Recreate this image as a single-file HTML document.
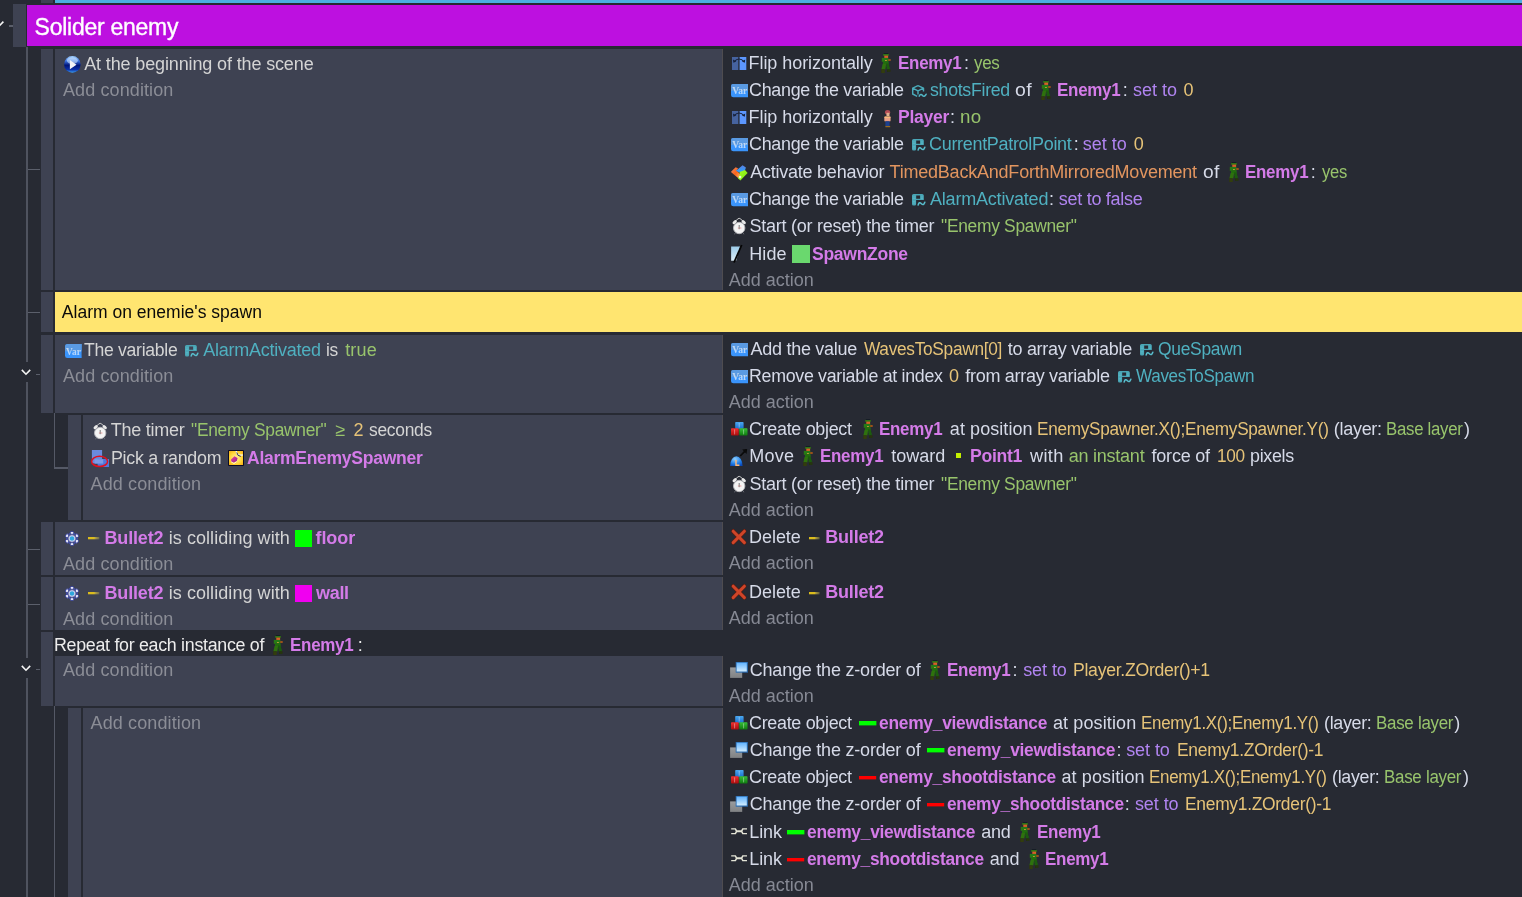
<!DOCTYPE html>
<html><head><meta charset="utf-8"><title>Events</title>
<style>
html,body{margin:0;padding:0;background:#272a33;}
body{width:1522px;height:897px;position:relative;overflow:hidden;will-change:transform;font-family:"Liberation Sans",sans-serif;font-size:18px;}
.b{position:absolute;}
.t{position:absolute;white-space:pre;line-height:20px;transform-origin:0 0;}
.i{position:absolute;display:block;overflow:visible;}
</style></head><body>
<svg width="0" height="0" style="position:absolute"><defs>
<filter id="soft2" x="-10%" y="-10%" width="120%" height="120%"><feGaussianBlur stdDeviation="0.25"/></filter>
<filter id="soft" x="-20%" y="-20%" width="140%" height="140%"><feGaussianBlur stdDeviation="0.42"/></filter>
<linearGradient id="gplay" x1="0" y1="0" x2="0" y2="1"><stop offset="0" stop-color="#9fd0ff"/><stop offset=".28" stop-color="#3f78e6"/><stop offset=".55" stop-color="#001478"/><stop offset=".8" stop-color="#0a2ea8"/><stop offset="1" stop-color="#3ea0f0"/></linearGradient>
<linearGradient id="gvar" x1="0" y1="0" x2="0" y2="1"><stop offset="0" stop-color="#5c9be0"/><stop offset="1" stop-color="#2a8cff"/></linearGradient>
<linearGradient id="gbo" x1="0" y1="0" x2="1" y2="1"><stop offset="0" stop-color="#e88a6a"/><stop offset=".5" stop-color="#f8641a"/><stop offset="1" stop-color="#ffc070"/></linearGradient>
<linearGradient id="gbb" x1="0" y1="0" x2="0" y2="1"><stop offset="0" stop-color="#5a7ee0"/><stop offset="1" stop-color="#2aa8ff"/></linearGradient>
<linearGradient id="gbg" x1="0" y1="0" x2="1" y2="1"><stop offset="0" stop-color="#a8ff20"/><stop offset=".6" stop-color="#8cf018"/><stop offset="1" stop-color="#0a8a0a"/></linearGradient>
<linearGradient id="ghide" x1="0" y1="0" x2="0" y2="1"><stop offset="0" stop-color="#9ccbe8"/><stop offset="1" stop-color="#dceef8"/></linearGradient>
<linearGradient id="gcb" x1="0" y1="0" x2="0" y2="1"><stop offset="0" stop-color="#4aa8f0"/><stop offset="1" stop-color="#1a70d0"/></linearGradient>
<linearGradient id="gcr" x1="0" y1="0" x2="0" y2="1"><stop offset="0" stop-color="#f03030"/><stop offset="1" stop-color="#a80c0c"/></linearGradient>
<linearGradient id="gcg" x1="0" y1="0" x2="0" y2="1"><stop offset="0" stop-color="#38c038"/><stop offset="1" stop-color="#0e7a0e"/></linearGradient>
<radialGradient id="gmv" cx=".4" cy=".3" r=".8"><stop offset="0" stop-color="#8fd0ff"/><stop offset=".6" stop-color="#2280e8"/><stop offset="1" stop-color="#0a48b8"/></radialGradient>
<radialGradient id="gal" cx=".5" cy=".5" r=".75"><stop offset="0" stop-color="#fff2a0"/><stop offset=".6" stop-color="#ffd232"/><stop offset="1" stop-color="#f0a010"/></radialGradient>
<linearGradient id="galm" x1="0" y1="0" x2="1" y2="1"><stop offset="0" stop-color="#f04a90"/><stop offset="1" stop-color="#8a1a9a"/></linearGradient>
<linearGradient id="gbul" x1="0" y1="0" x2="1" y2="0"><stop offset="0" stop-color="#dcbc1c"/><stop offset=".55" stop-color="#dcbc1c"/><stop offset=".6" stop-color="#d8c040" stop-opacity=".8"/><stop offset="1" stop-color="#c8b848" stop-opacity=".35"/></linearGradient>
<linearGradient id="gzg" x1="0" y1="0" x2="0" y2="1"><stop offset="0" stop-color="#9a9c9e"/><stop offset="1" stop-color="#808284"/></linearGradient>
<linearGradient id="gzb" x1="0" y1="0" x2="0" y2="1"><stop offset="0" stop-color="#62b4ff"/><stop offset="1" stop-color="#d4eeff"/></linearGradient>
</defs></svg>
<div class="b" style="left:41px;top:0px;width:12px;height:3px;background:#3e4252;"></div>
<div class="b" style="left:55px;top:0px;width:1467px;height:3px;background:#4baee2;"></div>
<div class="b" style="left:13px;top:4px;width:13px;height:43px;background:#3e4252;"></div>
<div class="b" style="left:27px;top:5px;width:1495px;height:41px;background:#bd10e0;"></div>
<div class="b" style="left:26px;top:47px;width:2px;height:314.5px;background:#4f535f;"></div>
<div class="b" style="left:26px;top:382px;width:2px;height:275.5px;background:#4f535f;"></div>
<div class="b" style="left:26px;top:678px;width:2px;height:219px;background:#4f535f;"></div>
<div class="b" style="left:28px;top:169px;width:12px;height:1px;background:#5b5f6b;"></div>
<div class="b" style="left:28px;top:312px;width:12px;height:1px;background:#5b5f6b;"></div>
<div class="b" style="left:28px;top:549px;width:12px;height:1px;background:#5b5f6b;"></div>
<div class="b" style="left:28px;top:604px;width:12px;height:1px;background:#5b5f6b;"></div>
<div class="b" style="left:36px;top:374px;width:4px;height:1px;background:#5b5f6b;"></div>
<div class="b" style="left:36px;top:669px;width:4px;height:1px;background:#5b5f6b;"></div>
<div class="b" style="left:9px;top:25px;width:4px;height:1.5px;background:#5b5f6b;"></div>
<div class="b" style="left:41px;top:49px;width:12px;height:241px;background:#3e4252;"></div>
<div class="b" style="left:55px;top:49px;width:668px;height:241px;background:#3e4252;box-shadow:inset -1px 0 0 #4e4c50;"></div>
<div class="b" style="left:41px;top:334.5px;width:12px;height:78.0px;background:#3e4252;"></div>
<div class="b" style="left:55px;top:334.5px;width:668px;height:78.0px;background:#3e4252;box-shadow:inset -1px 0 0 #4e4c50;"></div>
<div class="b" style="left:68px;top:415px;width:13px;height:105px;background:#3e4252;"></div>
<div class="b" style="left:83px;top:415px;width:640px;height:105px;background:#3e4252;box-shadow:inset -1px 0 0 #4e4c50;"></div>
<div class="b" style="left:41px;top:522px;width:12px;height:53px;background:#3e4252;"></div>
<div class="b" style="left:55px;top:522px;width:668px;height:53px;background:#3e4252;box-shadow:inset -1px 0 0 #4e4c50;"></div>
<div class="b" style="left:41px;top:577px;width:12px;height:53px;background:#3e4252;"></div>
<div class="b" style="left:55px;top:577px;width:668px;height:53px;background:#3e4252;box-shadow:inset -1px 0 0 #4e4c50;"></div>
<div class="b" style="left:68px;top:708px;width:13px;height:189px;background:#3e4252;"></div>
<div class="b" style="left:83px;top:708px;width:640px;height:189px;background:#3e4252;box-shadow:inset -1px 0 0 #4e4c50;"></div>
<div class="b" style="left:41px;top:292px;width:12px;height:40px;background:#3e4252;"></div>
<div class="b" style="left:55px;top:292px;width:1467px;height:40px;background:#ffe570;"></div>
<div class="b" style="left:41px;top:632px;width:12px;height:74.3px;background:#3e4252;"></div>
<div class="b" style="left:55px;top:656px;width:668px;height:50px;background:#3e4252;box-shadow:inset -1px 0 0 #4e4c50;"></div>
<div class="b" style="left:54px;top:413px;width:1px;height:55px;background:#555966;"></div>
<div class="b" style="left:54px;top:467px;width:14px;height:1.5px;background:#555966;"></div>
<div class="b" style="left:54px;top:706px;width:1px;height:191px;background:#555966;"></div>
<svg class="i" style="left:21px;top:369.3px" width="10" height="7" viewBox="0 0 10 7"><path d="M0.8 0.9 L5 5.2 L9.2 0.9" stroke="#f4f4f4" stroke-width="1.6" fill="none"/></svg>
<svg class="i" style="left:21px;top:665.3px" width="10" height="7" viewBox="0 0 10 7"><path d="M0.8 0.9 L5 5.2 L9.2 0.9" stroke="#f4f4f4" stroke-width="1.6" fill="none"/></svg>
<svg class="i" style="left:-6.5px;top:20.5px" width="10" height="7" viewBox="0 0 10 7"><path d="M0.8 5.2 L5 5.2 L9.4 0.6" stroke="#f4f4f4" stroke-width="1.6" fill="none"/></svg>
<span class="t" style="-webkit-text-stroke:0.35px #fff;left:34.60px;top:17.13px;color:#ffffff;letter-spacing:-0.267px;font-size:23.0px;">Solider enemy</span>
<span class="t" style="left:61.80px;top:302.04px;color:#0a0a0a;letter-spacing:0.015px;font-size:17.5px;">Alarm on enemie&#x27;s spawn</span>
<svg class="i" style="left:64.30px;top:56.20px" width="16.7" height="16.9" viewBox="0 0 17 17" preserveAspectRatio="none"><circle cx="8.5" cy="8.5" r="8.4" fill="url(#gplay)"/><ellipse cx="8.5" cy="4.6" rx="5.6" ry="3.4" fill="#dff0ff" opacity=".55"/><path d="M6 4.1 L12.7 8.7 L6 13.3 Z" fill="#f2f2f6"/></svg>
<span class="t" style="left:84.20px;top:53.86px;color:#d4d4d4;letter-spacing:-0.133px;">At the beginning of the scene</span>
<span class="t" style="left:62.90px;top:79.86px;color:#8b8d96;letter-spacing:0.117px;">Add condition</span>
<svg class="i" style="left:64.60px;top:343.90px" width="16.6" height="14" viewBox="0 0 17 13.3" preserveAspectRatio="none"><path d="M2.4 0 H17 V13.3 H2.4 Q0 13.3 0 10.9 V2.4 Q0 0 2.4 0 Z" fill="#3a94fb"/><path d="M2.4 0 H17 V6.9 H0 V2.4 Q0 0 2.4 0 Z" fill="#5a9ae2"/><text x="8.7" y="10.1" font-family="Liberation Serif" font-weight="bold" font-size="9.6" text-anchor="middle" fill="#fff" opacity=".62" filter="url(#soft2)">Var</text></svg>
<span class="t" style="left:83.57px;top:339.86px;color:#d4d4d4;letter-spacing:-0.300px;transform:scaleX(0.9789);">The variable</span>
<svg class="i" style="left:184.90px;top:344.90px" width="13.3" height="11.6" viewBox="0 0 13.3 11.6" preserveAspectRatio="none"><path fill-rule="evenodd" d="M1.6 0 H10.2 Q11.8 0 11.8 1.6 V6.1 H4.1 V10 Q4.1 11.5 2.6 11.5 H1.5 Q0 11.5 0 10 V1.6 Q0 0 1.6 0 Z M4.2 1.5 H8.1 V4.8 H4.2 Z" fill="#4aa6b6"/><path d="M0.6 3 H3.6 M0.6 4.6 H3.6 M8.8 3 H11.2 M8.8 4.6 H11.2 M0.8 7.4 H3.4 M0.8 9 H3.4" stroke="#5fc0cf" stroke-width=".6"/><path d="M6.2 10.9 Q7.2 7.4 9.4 9.7 T12.8 8.2" stroke="#58bccb" stroke-width="1.6" fill="none" stroke-linecap="round"/></svg>
<span class="t" style="left:203.20px;top:339.86px;color:#4fb0c0;letter-spacing:-0.254px;">AlarmActivated</span>
<span class="t" style="left:326.47px;top:339.86px;color:#d4d4d4;letter-spacing:-0.300px;transform:scaleX(0.9663);">is</span>
<span class="t" style="left:345.13px;top:339.86px;color:#98c46c;letter-spacing:0.167px;">true</span>
<span class="t" style="left:62.90px;top:365.86px;color:#8b8d96;letter-spacing:0.117px;">Add condition</span>
<svg class="i" style="left:92.80px;top:421.70px" width="14.4" height="18" viewBox="0 0 14.4 18" preserveAspectRatio="none"><path d="M4.2 3.6 Q7.2 -0.9 10.2 3.6" stroke="#cfcfcf" stroke-width="1" fill="none"/><ellipse cx="2.7" cy="5.1" rx="2.5" ry="1.55" transform="rotate(-40 2.7 5.1)" fill="#e9e9e9"/><ellipse cx="11.7" cy="5.1" rx="2.5" ry="1.55" transform="rotate(40 11.7 5.1)" fill="#e9e9e9"/><path d="M3.2 16 L2.6 17.3 M11.2 16 L11.8 17.3" stroke="#6e7078" stroke-width=".9"/><circle cx="7.2" cy="11" r="5.7" fill="#f4f4f4" stroke="#b9b9bd" stroke-width=".9"/><path d="M7.2 8 V12.2" stroke="#5a5a5a" stroke-width=".8"/><path d="M5.9 11 H6.9 M7.6 11 H9.4" stroke="#e06060" stroke-width=".6"/></svg>
<span class="t" style="left:110.87px;top:419.86px;color:#d4d4d4;letter-spacing:-0.275px;">The timer</span>
<span class="t" style="left:191.36px;top:419.86px;color:#98c46c;letter-spacing:-0.300px;transform:scaleX(0.9648);">&quot;Enemy Spawner&quot;</span>
<span class="t" style="left:335.58px;top:419.86px;color:#98c46c;">≥</span>
<span class="t" style="left:353.60px;top:419.86px;color:#e6c378;">2</span>
<span class="t" style="left:368.72px;top:419.86px;color:#d4d4d4;letter-spacing:-0.300px;transform:scaleX(0.9682);">seconds</span>
<svg class="i" style="left:91.00px;top:449.80px" width="18" height="17" viewBox="0 0 18 17" preserveAspectRatio="none"><rect x="0.9" y="0" width="10.2" height="13.4" fill="#6b8ade"/><rect x="6.6" y="9" width="11.4" height="8" fill="#4f78dc"/><rect x="3.6" y="9.2" width="8.6" height="4.4" fill="#7d9be6"/><ellipse cx="8.6" cy="11.4" rx="8" ry="5.1" stroke="#e2101e" stroke-width="1.5" fill="none"/></svg>
<span class="t" style="left:111.11px;top:447.86px;color:#d4d4d4;letter-spacing:-0.300px;transform:scaleX(0.9914);">Pick a random</span>
<svg class="i" style="left:228.00px;top:450.00px" width="16" height="16" viewBox="0 0 16 16" preserveAspectRatio="none"><rect x="0" y="0" width="16" height="16" rx="1" fill="#0b0b26"/><rect x="1" y="1" width="14" height="14" fill="url(#gal)"/><path d="M8.2 1 Q8.4 6 14.8 5" stroke="#f4f4fa" stroke-width="1.3" fill="none"/><path d="M8.8 2.5 Q9.4 6.2 12.8 6.4" stroke="#303048" stroke-width="1" fill="none"/><path d="M3 9.5 L6.4 6.2 L9.6 8 L8.8 11 L5.8 12.6 L3.4 11.8 Z" fill="url(#galm)"/><path d="M3.2 11.8 L6 13.6 L8.6 11.6" stroke="#fff" stroke-width=".9" fill="none" opacity=".8"/></svg>
<span class="t" style="left:246.81px;top:447.86px;color:#d47be8;letter-spacing:-0.300px;transform:scaleX(0.9747);font-weight:700;">AlarmEnemySpawner</span>
<span class="t" style="left:90.60px;top:473.86px;color:#8b8d96;letter-spacing:0.117px;">Add condition</span>
<svg class="i" style="left:65.20px;top:530.90px" width="14" height="15" viewBox="0 0 14 15" preserveAspectRatio="none"><g filter="url(#soft2)"><circle cx="7" cy="7.5" r="5.2" fill="none" stroke="#4450aa" stroke-width="1.5"/><g fill="#ececf8" stroke="#2f3a9a" stroke-width=".8"><ellipse cx="7" cy="1.9" rx="1.9" ry="1.5"/><ellipse cx="7" cy="13.1" rx="1.9" ry="1.5"/><ellipse cx="2.1" cy="4.7" rx="1.9" ry="1.5" transform="rotate(-60 2.1 4.7)"/><ellipse cx="11.9" cy="4.7" rx="1.9" ry="1.5" transform="rotate(60 11.9 4.7)"/><ellipse cx="2.1" cy="10.3" rx="1.9" ry="1.5" transform="rotate(60 2.1 10.3)"/><ellipse cx="11.9" cy="10.3" rx="1.9" ry="1.5" transform="rotate(-60 11.9 10.3)"/></g><circle cx="7" cy="7.5" r="3.6" fill="#dcdcf2" stroke="#6a72bc" stroke-width=".6"/><circle cx="7" cy="7.5" r="2.3" fill="#2fa6dc"/></g></svg>
<svg class="i" style="left:88.10px;top:537.00px" width="11.3" height="2.3" viewBox="0 0 11.3 2.6" preserveAspectRatio="none"><rect x="0" y="0" width="11.3" height="2.6" fill="url(#gbul)"/></svg>
<span class="t" style="left:104.53px;top:527.86px;color:#d47be8;letter-spacing:-0.178px;font-weight:700;">Bullet2</span>
<span class="t" style="left:168.73px;top:527.86px;color:#d4d4d4;letter-spacing:0.065px;">is colliding with</span>
<svg class="i" style="left:295.00px;top:530.00px" width="17" height="17" viewBox="0 0 17 17" preserveAspectRatio="none"><rect width="17" height="17" fill="#00ff00"/></svg>
<span class="t" style="left:315.47px;top:527.86px;color:#d47be8;letter-spacing:-0.075px;font-weight:700;">floor</span>
<span class="t" style="left:62.90px;top:553.86px;color:#8b8d96;letter-spacing:0.117px;">Add condition</span>
<svg class="i" style="left:65.20px;top:585.90px" width="14" height="15" viewBox="0 0 14 15" preserveAspectRatio="none"><g filter="url(#soft2)"><circle cx="7" cy="7.5" r="5.2" fill="none" stroke="#4450aa" stroke-width="1.5"/><g fill="#ececf8" stroke="#2f3a9a" stroke-width=".8"><ellipse cx="7" cy="1.9" rx="1.9" ry="1.5"/><ellipse cx="7" cy="13.1" rx="1.9" ry="1.5"/><ellipse cx="2.1" cy="4.7" rx="1.9" ry="1.5" transform="rotate(-60 2.1 4.7)"/><ellipse cx="11.9" cy="4.7" rx="1.9" ry="1.5" transform="rotate(60 11.9 4.7)"/><ellipse cx="2.1" cy="10.3" rx="1.9" ry="1.5" transform="rotate(60 2.1 10.3)"/><ellipse cx="11.9" cy="10.3" rx="1.9" ry="1.5" transform="rotate(-60 11.9 10.3)"/></g><circle cx="7" cy="7.5" r="3.6" fill="#dcdcf2" stroke="#6a72bc" stroke-width=".6"/><circle cx="7" cy="7.5" r="2.3" fill="#2fa6dc"/></g></svg>
<svg class="i" style="left:88.10px;top:592.00px" width="11.3" height="2.3" viewBox="0 0 11.3 2.6" preserveAspectRatio="none"><rect x="0" y="0" width="11.3" height="2.6" fill="url(#gbul)"/></svg>
<span class="t" style="left:104.53px;top:582.86px;color:#d47be8;letter-spacing:-0.178px;font-weight:700;">Bullet2</span>
<span class="t" style="left:168.73px;top:582.86px;color:#d4d4d4;letter-spacing:0.065px;">is colliding with</span>
<svg class="i" style="left:295.00px;top:585.00px" width="17" height="17" viewBox="0 0 17 17" preserveAspectRatio="none"><rect width="17" height="17" fill="#f000f0"/></svg>
<span class="t" style="left:315.80px;top:582.86px;color:#d47be8;letter-spacing:-0.300px;transform:scaleX(0.9990);font-weight:700;">wall</span>
<span class="t" style="left:62.90px;top:608.86px;color:#8b8d96;letter-spacing:0.117px;">Add condition</span>
<span class="t" style="left:54.11px;top:634.86px;color:#ececec;letter-spacing:-0.300px;transform:scaleX(0.9907);">Repeat for each instance of</span>
<svg class="i" style="left:272.80px;top:635.20px" width="10" height="20" viewBox="0 0 10 20" preserveAspectRatio="none"><g filter="url(#soft)"><rect x="2.9" y="0" width="4.2" height="1.1" fill="#141428"/><rect x="2.2" y="0.9" width="5.6" height="2" fill="#2f7414"/><rect x="3.3" y="2.6" width="3.8" height="2.5" fill="#d95f28"/><rect x="0.8" y="4.9" width="6.6" height="3.9" fill="#287a14"/><rect x="7.2" y="6" width="2.5" height="2" fill="#9a5218"/><rect x="4.1" y="7" width="1.7" height="1" fill="#c49c34"/><rect x="2" y="8.6" width="5.6" height="3.2" fill="#236e10"/><path d="M1.6 11 L5 11 L4.3 16.4 L0.4 16.4 Z" fill="#2e720e"/><path d="M5 10.5 L7.7 10.5 L9.1 16.6 L5.8 16.6 Z" fill="#1b5c0c"/><rect x="0.4" y="16.2" width="3.4" height="3.8" fill="#303c0a"/><rect x="6.2" y="16.2" width="3.2" height="2.7" fill="#263408"/></g></svg>
<span class="t" style="left:289.80px;top:634.86px;color:#d47be8;letter-spacing:-0.300px;transform:scaleX(0.9433);font-weight:700;">Enemy1</span>
<span class="t" style="left:357.70px;top:634.86px;color:#ececec;">:</span>
<span class="t" style="left:62.90px;top:659.86px;color:#8b8d96;letter-spacing:0.117px;">Add condition</span>
<span class="t" style="left:90.60px;top:712.86px;color:#8b8d96;letter-spacing:0.117px;">Add condition</span>
<svg class="i" style="left:732.00px;top:56.70px" width="14.3" height="13" viewBox="0 0 14.3 13" preserveAspectRatio="none"><rect x="0" y="0" width="6.3" height="13" fill="#46639f"/><rect x="7.6" y="0" width="6.7" height="13" fill="#5c97ff"/><path d="M2.2 4.6 Q7.1 -0.6 12 4.6" stroke="#16203a" stroke-width="1.1" fill="none"/><path d="M1 2.6 L1.4 5.8 L4.2 4.6 Z M13.2 2.6 L12.8 5.8 L10 4.6 Z" fill="#16203a"/></svg>
<span class="t" style="left:748.50px;top:52.86px;color:#d6dae8;letter-spacing:-0.050px;">Flip horizontally</span>
<svg class="i" style="left:881.40px;top:52.90px" width="10" height="20" viewBox="0 0 10 20" preserveAspectRatio="none"><g filter="url(#soft)"><rect x="2.9" y="0" width="4.2" height="1.1" fill="#141428"/><rect x="2.2" y="0.9" width="5.6" height="2" fill="#2f7414"/><rect x="3.3" y="2.6" width="3.8" height="2.5" fill="#d95f28"/><rect x="0.8" y="4.9" width="6.6" height="3.9" fill="#287a14"/><rect x="7.2" y="6" width="2.5" height="2" fill="#9a5218"/><rect x="4.1" y="7" width="1.7" height="1" fill="#c49c34"/><rect x="2" y="8.6" width="5.6" height="3.2" fill="#236e10"/><path d="M1.6 11 L5 11 L4.3 16.4 L0.4 16.4 Z" fill="#2e720e"/><path d="M5 10.5 L7.7 10.5 L9.1 16.6 L5.8 16.6 Z" fill="#1b5c0c"/><rect x="0.4" y="16.2" width="3.4" height="3.8" fill="#303c0a"/><rect x="6.2" y="16.2" width="3.2" height="2.7" fill="#263408"/></g></svg>
<span class="t" style="left:898.30px;top:52.86px;color:#d47be8;letter-spacing:-0.300px;transform:scaleX(0.9433);font-weight:700;">Enemy1</span>
<span class="t" style="left:964.10px;top:52.86px;color:#d6dae8;">:</span>
<span class="t" style="left:974.30px;top:52.86px;color:#98c46c;letter-spacing:-0.300px;transform:scaleX(0.9426);">yes</span>
<svg class="i" style="left:731.00px;top:83.70px" width="17" height="13.3" viewBox="0 0 17 13.3" preserveAspectRatio="none"><path d="M2.4 0 H17 V13.3 H2.4 Q0 13.3 0 10.9 V2.4 Q0 0 2.4 0 Z" fill="#3a94fb"/><path d="M2.4 0 H17 V6.9 H0 V2.4 Q0 0 2.4 0 Z" fill="#5a9ae2"/><text x="8.7" y="10.1" font-family="Liberation Serif" font-weight="bold" font-size="9.6" text-anchor="middle" fill="#fff" opacity=".62" filter="url(#soft2)">Var</text></svg>
<span class="t" style="left:749.47px;top:79.86px;color:#d6dae8;letter-spacing:-0.300px;transform:scaleX(0.9955);">Change the variable</span>
<svg class="i" style="left:912.00px;top:84.50px" width="14.8" height="12.2" viewBox="0 0 14.8 12.2" preserveAspectRatio="none"><path d="M6 0.7 L11.5 3.2 V6.6 M6 0.7 L0.7 3.2 V9 L5.2 11.3 M0.7 3.2 L6 5.8 L11.5 3.2 M6 5.8 V9.4" stroke="#4aaab9" stroke-width="1.45" fill="none" stroke-linejoin="round"/><path d="M7.2 11.1 q1.6 -2.8 3.3 -0.7 t3.6 -1.1" stroke="#52b6c5" stroke-width="1.55" fill="none" stroke-linecap="round"/></svg>
<span class="t" style="left:929.51px;top:79.86px;color:#4fb0c0;letter-spacing:-0.300px;transform:scaleX(0.9862);">shotsFired</span>
<span class="t" style="left:1014.88px;top:79.86px;color:#d6dae8;letter-spacing:0.300px;transform:scaleX(1.0797);">of</span>
<svg class="i" style="left:1040.90px;top:79.90px" width="10" height="20" viewBox="0 0 10 20" preserveAspectRatio="none"><g filter="url(#soft)"><rect x="2.9" y="0" width="4.2" height="1.1" fill="#141428"/><rect x="2.2" y="0.9" width="5.6" height="2" fill="#2f7414"/><rect x="3.3" y="2.6" width="3.8" height="2.5" fill="#d95f28"/><rect x="0.8" y="4.9" width="6.6" height="3.9" fill="#287a14"/><rect x="7.2" y="6" width="2.5" height="2" fill="#9a5218"/><rect x="4.1" y="7" width="1.7" height="1" fill="#c49c34"/><rect x="2" y="8.6" width="5.6" height="3.2" fill="#236e10"/><path d="M1.6 11 L5 11 L4.3 16.4 L0.4 16.4 Z" fill="#2e720e"/><path d="M5 10.5 L7.7 10.5 L9.1 16.6 L5.8 16.6 Z" fill="#1b5c0c"/><rect x="0.4" y="16.2" width="3.4" height="3.8" fill="#303c0a"/><rect x="6.2" y="16.2" width="3.2" height="2.7" fill="#263408"/></g></svg>
<span class="t" style="left:1056.90px;top:79.86px;color:#d47be8;letter-spacing:-0.300px;transform:scaleX(0.9433);font-weight:700;">Enemy1</span>
<span class="t" style="left:1122.65px;top:79.86px;color:#d6dae8;">:</span>
<span class="t" style="left:1133.00px;top:79.86px;color:#b084f0;letter-spacing:-0.007px;">set to</span>
<span class="t" style="left:1183.60px;top:79.86px;color:#e6c378;">0</span>
<svg class="i" style="left:732.00px;top:110.70px" width="14.3" height="13" viewBox="0 0 14.3 13" preserveAspectRatio="none"><rect x="0" y="0" width="6.3" height="13" fill="#46639f"/><rect x="7.6" y="0" width="6.7" height="13" fill="#5c97ff"/><path d="M2.2 4.6 Q7.1 -0.6 12 4.6" stroke="#16203a" stroke-width="1.1" fill="none"/><path d="M1 2.6 L1.4 5.8 L4.2 4.6 Z M13.2 2.6 L12.8 5.8 L10 4.6 Z" fill="#16203a"/></svg>
<span class="t" style="left:748.50px;top:106.86px;color:#d6dae8;letter-spacing:-0.050px;">Flip horizontally</span>
<svg class="i" style="left:883.60px;top:109.90px" width="6.7" height="17.3" viewBox="0 0 6.7 17.3" preserveAspectRatio="none"><g filter="url(#soft)"><ellipse cx="3.6" cy="2.3" rx="2.6" ry="2.4" fill="#b24c54"/><rect x="2.5" y="2.8" width="3" height="3.2" fill="#e0b090"/><rect x="0.3" y="6.6" width="6.3" height="5" rx="1" fill="#e79f86"/><rect x="0.6" y="6.6" width="5.8" height="1.3" fill="#f8bc78"/><rect x="1.4" y="11.2" width="4.2" height="5" fill="#1d3f8e"/><rect x="1.4" y="16.1" width="4.8" height="1.1" fill="#a4701c"/></g></svg>
<span class="t" style="left:898.26px;top:106.86px;color:#d47be8;letter-spacing:-0.300px;transform:scaleX(0.9752);font-weight:700;">Player</span>
<span class="t" style="left:950.05px;top:106.86px;color:#d6dae8;">:</span>
<span class="t" style="left:960.09px;top:106.86px;color:#98c46c;letter-spacing:0.300px;transform:scaleX(1.0397);">no</span>
<svg class="i" style="left:731.00px;top:137.70px" width="17" height="13.3" viewBox="0 0 17 13.3" preserveAspectRatio="none"><path d="M2.4 0 H17 V13.3 H2.4 Q0 13.3 0 10.9 V2.4 Q0 0 2.4 0 Z" fill="#3a94fb"/><path d="M2.4 0 H17 V6.9 H0 V2.4 Q0 0 2.4 0 Z" fill="#5a9ae2"/><text x="8.7" y="10.1" font-family="Liberation Serif" font-weight="bold" font-size="9.6" text-anchor="middle" fill="#fff" opacity=".62" filter="url(#soft2)">Var</text></svg>
<span class="t" style="left:749.47px;top:133.86px;color:#d6dae8;letter-spacing:-0.300px;transform:scaleX(0.9955);">Change the variable</span>
<svg class="i" style="left:911.70px;top:138.90px" width="13.3" height="11.6" viewBox="0 0 13.3 11.6" preserveAspectRatio="none"><path fill-rule="evenodd" d="M1.6 0 H10.2 Q11.8 0 11.8 1.6 V6.1 H4.1 V10 Q4.1 11.5 2.6 11.5 H1.5 Q0 11.5 0 10 V1.6 Q0 0 1.6 0 Z M4.2 1.5 H8.1 V4.8 H4.2 Z" fill="#4aa6b6"/><path d="M0.6 3 H3.6 M0.6 4.6 H3.6 M8.8 3 H11.2 M8.8 4.6 H11.2 M0.8 7.4 H3.4 M0.8 9 H3.4" stroke="#5fc0cf" stroke-width=".6"/><path d="M6.2 10.9 Q7.2 7.4 9.4 9.7 T12.8 8.2" stroke="#58bccb" stroke-width="1.6" fill="none" stroke-linecap="round"/></svg>
<span class="t" style="left:929.17px;top:133.86px;color:#4fb0c0;letter-spacing:-0.300px;transform:scaleX(0.9988);">CurrentPatrolPoint</span>
<span class="t" style="left:1073.85px;top:133.86px;color:#d6dae8;">:</span>
<span class="t" style="left:1082.80px;top:133.86px;color:#b084f0;letter-spacing:-0.007px;">set to</span>
<span class="t" style="left:1133.80px;top:133.86px;color:#e6c378;">0</span>
<svg class="i" style="left:730.70px;top:164.60px" width="16.7" height="15.5" viewBox="0 0 16.7 15.5" preserveAspectRatio="none"><path d="M0.2 6.6 L4.7 2.3 L7.2 3.6 L5.6 5.6 L9.6 9.5 L8 13.8 L0.2 7.2 Z" fill="url(#gbo)"/><path d="M5 5.7 L11.6 0.3 L14.9 2.4 L14.2 4.8 L12.8 7.2 L8.4 7.4 Z" fill="url(#gbb)"/><path d="M8.6 6.9 L14 4.9 L16.7 8 L9.4 15.5 L7 13.2 L8.9 9.3 Z" fill="url(#gbg)"/><circle cx="9.1" cy="12.1" r="1.3" fill="#fff" opacity=".8"/></svg>
<span class="t" style="left:750.25px;top:161.86px;color:#d6dae8;letter-spacing:-0.243px;">Activate behavior</span>
<span class="t" style="left:889.57px;top:161.86px;color:#e2955f;letter-spacing:-0.216px;">TimedBackAndForthMirroredMovement</span>
<span class="t" style="left:1203.19px;top:161.86px;color:#d6dae8;letter-spacing:0.300px;transform:scaleX(1.0661);">of</span>
<svg class="i" style="left:1229.10px;top:161.90px" width="10" height="20" viewBox="0 0 10 20" preserveAspectRatio="none"><g filter="url(#soft)"><rect x="2.9" y="0" width="4.2" height="1.1" fill="#141428"/><rect x="2.2" y="0.9" width="5.6" height="2" fill="#2f7414"/><rect x="3.3" y="2.6" width="3.8" height="2.5" fill="#d95f28"/><rect x="0.8" y="4.9" width="6.6" height="3.9" fill="#287a14"/><rect x="7.2" y="6" width="2.5" height="2" fill="#9a5218"/><rect x="4.1" y="7" width="1.7" height="1" fill="#c49c34"/><rect x="2" y="8.6" width="5.6" height="3.2" fill="#236e10"/><path d="M1.6 11 L5 11 L4.3 16.4 L0.4 16.4 Z" fill="#2e720e"/><path d="M5 10.5 L7.7 10.5 L9.1 16.6 L5.8 16.6 Z" fill="#1b5c0c"/><rect x="0.4" y="16.2" width="3.4" height="3.8" fill="#303c0a"/><rect x="6.2" y="16.2" width="3.2" height="2.7" fill="#263408"/></g></svg>
<span class="t" style="left:1245.10px;top:161.86px;color:#d47be8;letter-spacing:-0.300px;transform:scaleX(0.9418);font-weight:700;">Enemy1</span>
<span class="t" style="left:1310.85px;top:161.86px;color:#d6dae8;">:</span>
<span class="t" style="left:1321.80px;top:161.86px;color:#98c46c;letter-spacing:-0.300px;transform:scaleX(0.9202);">yes</span>
<svg class="i" style="left:731.00px;top:192.70px" width="17" height="13.3" viewBox="0 0 17 13.3" preserveAspectRatio="none"><path d="M2.4 0 H17 V13.3 H2.4 Q0 13.3 0 10.9 V2.4 Q0 0 2.4 0 Z" fill="#3a94fb"/><path d="M2.4 0 H17 V6.9 H0 V2.4 Q0 0 2.4 0 Z" fill="#5a9ae2"/><text x="8.7" y="10.1" font-family="Liberation Serif" font-weight="bold" font-size="9.6" text-anchor="middle" fill="#fff" opacity=".62" filter="url(#soft2)">Var</text></svg>
<span class="t" style="left:749.47px;top:188.86px;color:#d6dae8;letter-spacing:-0.300px;transform:scaleX(0.9955);">Change the variable</span>
<svg class="i" style="left:911.70px;top:193.90px" width="13.3" height="11.6" viewBox="0 0 13.3 11.6" preserveAspectRatio="none"><path fill-rule="evenodd" d="M1.6 0 H10.2 Q11.8 0 11.8 1.6 V6.1 H4.1 V10 Q4.1 11.5 2.6 11.5 H1.5 Q0 11.5 0 10 V1.6 Q0 0 1.6 0 Z M4.2 1.5 H8.1 V4.8 H4.2 Z" fill="#4aa6b6"/><path d="M0.6 3 H3.6 M0.6 4.6 H3.6 M8.8 3 H11.2 M8.8 4.6 H11.2 M0.8 7.4 H3.4 M0.8 9 H3.4" stroke="#5fc0cf" stroke-width=".6"/><path d="M6.2 10.9 Q7.2 7.4 9.4 9.7 T12.8 8.2" stroke="#58bccb" stroke-width="1.6" fill="none" stroke-linecap="round"/></svg>
<span class="t" style="left:930.00px;top:188.86px;color:#4fb0c0;letter-spacing:-0.200px;">AlarmActivated</span>
<span class="t" style="left:1048.95px;top:188.86px;color:#d6dae8;">:</span>
<span class="t" style="left:1058.80px;top:188.86px;color:#b084f0;letter-spacing:-0.285px;">set to false</span>
<svg class="i" style="left:732.00px;top:217.40px" width="14.4" height="18" viewBox="0 0 14.4 18" preserveAspectRatio="none"><path d="M4.2 3.6 Q7.2 -0.9 10.2 3.6" stroke="#cfcfcf" stroke-width="1" fill="none"/><ellipse cx="2.7" cy="5.1" rx="2.5" ry="1.55" transform="rotate(-40 2.7 5.1)" fill="#e9e9e9"/><ellipse cx="11.7" cy="5.1" rx="2.5" ry="1.55" transform="rotate(40 11.7 5.1)" fill="#e9e9e9"/><path d="M3.2 16 L2.6 17.3 M11.2 16 L11.8 17.3" stroke="#6e7078" stroke-width=".9"/><circle cx="7.2" cy="11" r="5.7" fill="#f4f4f4" stroke="#b9b9bd" stroke-width=".9"/><path d="M7.2 8 V12.2" stroke="#5a5a5a" stroke-width=".8"/><path d="M5.9 11 H6.9 M7.6 11 H9.4" stroke="#e06060" stroke-width=".6"/></svg>
<span class="t" style="left:749.42px;top:215.86px;color:#d6dae8;letter-spacing:-0.242px;">Start (or reset) the timer</span>
<span class="t" style="left:941.16px;top:215.86px;color:#98c46c;letter-spacing:-0.300px;transform:scaleX(0.9663);">&quot;Enemy Spawner&quot;</span>
<svg class="i" style="left:731.00px;top:244.80px" width="11" height="17.5" viewBox="0 0 11 17.5" preserveAspectRatio="none"><path d="M0.1 1.4 H9.2 L5.2 15.8 H0.1 Z" fill="url(#ghide)"/><path d="M10.7 0 L3 17.5" stroke="#050505" stroke-width="1.8"/></svg>
<span class="t" style="left:749.30px;top:243.86px;color:#d6dae8;letter-spacing:0.078px;">Hide</span>
<svg class="i" style="left:792.00px;top:245.00px" width="18" height="18" viewBox="0 0 18 18" preserveAspectRatio="none"><rect width="18" height="18" fill="#6ad86e"/></svg>
<span class="t" style="left:812.41px;top:243.86px;color:#d47be8;letter-spacing:-0.300px;transform:scaleX(0.9744);font-weight:700;">SpawnZone</span>
<span class="t" style="left:728.80px;top:269.86px;color:#868994;">Add action</span>
<svg class="i" style="left:731.00px;top:342.70px" width="17" height="13.3" viewBox="0 0 17 13.3" preserveAspectRatio="none"><path d="M2.4 0 H17 V13.3 H2.4 Q0 13.3 0 10.9 V2.4 Q0 0 2.4 0 Z" fill="#3a94fb"/><path d="M2.4 0 H17 V6.9 H0 V2.4 Q0 0 2.4 0 Z" fill="#5a9ae2"/><text x="8.7" y="10.1" font-family="Liberation Serif" font-weight="bold" font-size="9.6" text-anchor="middle" fill="#fff" opacity=".62" filter="url(#soft2)">Var</text></svg>
<span class="t" style="left:750.60px;top:338.86px;color:#d6dae8;letter-spacing:-0.286px;">Add the value</span>
<span class="t" style="left:863.84px;top:338.86px;color:#e6c378;letter-spacing:-0.300px;transform:scaleX(0.9594);">WavesToSpawn[0]</span>
<span class="t" style="left:1007.73px;top:338.86px;color:#d6dae8;letter-spacing:-0.285px;">to array variable</span>
<svg class="i" style="left:1139.80px;top:343.90px" width="13.3" height="11.6" viewBox="0 0 13.3 11.6" preserveAspectRatio="none"><path fill-rule="evenodd" d="M1.6 0 H10.2 Q11.8 0 11.8 1.6 V6.1 H4.1 V10 Q4.1 11.5 2.6 11.5 H1.5 Q0 11.5 0 10 V1.6 Q0 0 1.6 0 Z M4.2 1.5 H8.1 V4.8 H4.2 Z" fill="#4aa6b6"/><path d="M0.6 3 H3.6 M0.6 4.6 H3.6 M8.8 3 H11.2 M8.8 4.6 H11.2 M0.8 7.4 H3.4 M0.8 9 H3.4" stroke="#5fc0cf" stroke-width=".6"/><path d="M6.2 10.9 Q7.2 7.4 9.4 9.7 T12.8 8.2" stroke="#58bccb" stroke-width="1.6" fill="none" stroke-linecap="round"/></svg>
<span class="t" style="left:1157.69px;top:338.86px;color:#4fb0c0;letter-spacing:-0.300px;transform:scaleX(0.9682);">QueSpawn</span>
<svg class="i" style="left:731.00px;top:369.70px" width="17" height="13.3" viewBox="0 0 17 13.3" preserveAspectRatio="none"><path d="M2.4 0 H17 V13.3 H2.4 Q0 13.3 0 10.9 V2.4 Q0 0 2.4 0 Z" fill="#3a94fb"/><path d="M2.4 0 H17 V6.9 H0 V2.4 Q0 0 2.4 0 Z" fill="#5a9ae2"/><text x="8.7" y="10.1" font-family="Liberation Serif" font-weight="bold" font-size="9.6" text-anchor="middle" fill="#fff" opacity=".62" filter="url(#soft2)">Var</text></svg>
<span class="t" style="left:749.12px;top:365.86px;color:#d6dae8;letter-spacing:-0.300px;transform:scaleX(0.9885);">Remove variable at index</span>
<span class="t" style="left:948.95px;top:365.86px;color:#e6c378;">0</span>
<span class="t" style="left:965.33px;top:365.86px;color:#d6dae8;letter-spacing:-0.298px;">from array variable</span>
<svg class="i" style="left:1118.00px;top:370.90px" width="13.3" height="11.6" viewBox="0 0 13.3 11.6" preserveAspectRatio="none"><path fill-rule="evenodd" d="M1.6 0 H10.2 Q11.8 0 11.8 1.6 V6.1 H4.1 V10 Q4.1 11.5 2.6 11.5 H1.5 Q0 11.5 0 10 V1.6 Q0 0 1.6 0 Z M4.2 1.5 H8.1 V4.8 H4.2 Z" fill="#4aa6b6"/><path d="M0.6 3 H3.6 M0.6 4.6 H3.6 M8.8 3 H11.2 M8.8 4.6 H11.2 M0.8 7.4 H3.4 M0.8 9 H3.4" stroke="#5fc0cf" stroke-width=".6"/><path d="M6.2 10.9 Q7.2 7.4 9.4 9.7 T12.8 8.2" stroke="#58bccb" stroke-width="1.6" fill="none" stroke-linecap="round"/></svg>
<span class="t" style="left:1136.14px;top:365.86px;color:#4fb0c0;letter-spacing:-0.300px;transform:scaleX(0.9475);">WavesToSpawn</span>
<span class="t" style="left:728.80px;top:391.86px;color:#868994;">Add action</span>
<svg class="i" style="left:731.00px;top:422.10px" width="16.5" height="13.5" viewBox="0 0 16.5 13.5" preserveAspectRatio="none"><rect x="4.2" y="0" width="8.4" height="6.9" rx=".8" fill="url(#gcb)"/><rect x="0" y="6.3" width="7.7" height="7.2" rx=".8" fill="url(#gcr)"/><rect x="8.3" y="6.3" width="8.2" height="7.2" rx=".8" fill="url(#gcg)"/><path d="M8.2 1 V5.6 M3.6 7.4 V12.4 M12.6 7.4 V12.4" stroke="#fff" stroke-width=".7" opacity=".55"/></svg>
<span class="t" style="left:749.47px;top:418.86px;color:#d6dae8;letter-spacing:-0.300px;transform:scaleX(0.9955);">Create object</span>
<svg class="i" style="left:863.30px;top:418.90px" width="10" height="20" viewBox="0 0 10 20" preserveAspectRatio="none"><g filter="url(#soft)"><rect x="2.9" y="0" width="4.2" height="1.1" fill="#141428"/><rect x="2.2" y="0.9" width="5.6" height="2" fill="#2f7414"/><rect x="3.3" y="2.6" width="3.8" height="2.5" fill="#d95f28"/><rect x="0.8" y="4.9" width="6.6" height="3.9" fill="#287a14"/><rect x="7.2" y="6" width="2.5" height="2" fill="#9a5218"/><rect x="4.1" y="7" width="1.7" height="1" fill="#c49c34"/><rect x="2" y="8.6" width="5.6" height="3.2" fill="#236e10"/><path d="M1.6 11 L5 11 L4.3 16.4 L0.4 16.4 Z" fill="#2e720e"/><path d="M5 10.5 L7.7 10.5 L9.1 16.6 L5.8 16.6 Z" fill="#1b5c0c"/><rect x="0.4" y="16.2" width="3.4" height="3.8" fill="#303c0a"/><rect x="6.2" y="16.2" width="3.2" height="2.7" fill="#263408"/></g></svg>
<span class="t" style="left:878.90px;top:418.86px;color:#d47be8;letter-spacing:-0.300px;transform:scaleX(0.9418);font-weight:700;">Enemy1</span>
<span class="t" style="left:949.83px;top:418.86px;color:#d6dae8;letter-spacing:0.073px;">at position</span>
<span class="t" style="left:1037.27px;top:418.86px;color:#e6c378;letter-spacing:-0.300px;transform:scaleX(0.9554);">EnemySpawner.X();EnemySpawner.Y()</span>
<span class="t" style="left:1333.83px;top:418.86px;color:#d6dae8;letter-spacing:-0.294px;">(layer:</span>
<span class="t" style="left:1385.90px;top:418.86px;color:#98c46c;letter-spacing:-0.300px;transform:scaleX(0.9339);">Base layer</span>
<span class="t" style="left:1464.05px;top:418.86px;color:#d6dae8;">)</span>
<svg class="i" style="left:730.00px;top:449.40px" width="17.2" height="17" viewBox="0 0 17.2 17" preserveAspectRatio="none"><path d="M0.1 16.9 A6.25 9.7 0 0 1 12.6 16.9 Z" fill="url(#gmv)"/><path d="M6 11 V16.2 H9.4" stroke="#ffb878" stroke-width="1.4" fill="none"/><path d="M10.2 7 L16.2 0.9" stroke="#0a0a0a" stroke-width="1.7"/><path d="M17.2 0 L16.6 5 L12.2 0.6 Z" fill="#0a0a0a"/></svg>
<span class="t" style="left:749.30px;top:445.86px;color:#d6dae8;letter-spacing:0.244px;">Move</span>
<svg class="i" style="left:802.80px;top:445.90px" width="10" height="20" viewBox="0 0 10 20" preserveAspectRatio="none"><g filter="url(#soft)"><rect x="2.9" y="0" width="4.2" height="1.1" fill="#141428"/><rect x="2.2" y="0.9" width="5.6" height="2" fill="#2f7414"/><rect x="3.3" y="2.6" width="3.8" height="2.5" fill="#d95f28"/><rect x="0.8" y="4.9" width="6.6" height="3.9" fill="#287a14"/><rect x="7.2" y="6" width="2.5" height="2" fill="#9a5218"/><rect x="4.1" y="7" width="1.7" height="1" fill="#c49c34"/><rect x="2" y="8.6" width="5.6" height="3.2" fill="#236e10"/><path d="M1.6 11 L5 11 L4.3 16.4 L0.4 16.4 Z" fill="#2e720e"/><path d="M5 10.5 L7.7 10.5 L9.1 16.6 L5.8 16.6 Z" fill="#1b5c0c"/><rect x="0.4" y="16.2" width="3.4" height="3.8" fill="#303c0a"/><rect x="6.2" y="16.2" width="3.2" height="2.7" fill="#263408"/></g></svg>
<span class="t" style="left:819.50px;top:445.86px;color:#d47be8;letter-spacing:-0.300px;transform:scaleX(0.9418);font-weight:700;">Enemy1</span>
<span class="t" style="left:891.23px;top:445.86px;color:#d6dae8;letter-spacing:-0.013px;">toward</span>
<svg class="i" style="left:955.80px;top:453.40px" width="5" height="5" viewBox="0 0 5 5" preserveAspectRatio="none"><rect width="5" height="5" fill="#c4f000"/></svg>
<span class="t" style="left:970.46px;top:445.86px;color:#d47be8;letter-spacing:-0.300px;transform:scaleX(0.9781);font-weight:700;">Point1</span>
<span class="t" style="left:1030.25px;top:445.86px;color:#d6dae8;letter-spacing:0.300px;transform:scaleX(1.0131);">with</span>
<span class="t" style="left:1068.63px;top:445.86px;color:#98c46c;letter-spacing:-0.226px;">an instant</span>
<span class="t" style="left:1151.53px;top:445.86px;color:#d6dae8;letter-spacing:-0.214px;">force of</span>
<span class="t" style="left:1216.83px;top:445.86px;color:#e6c378;letter-spacing:-0.300px;transform:scaleX(0.9562);">100</span>
<span class="t" style="left:1250.44px;top:445.86px;color:#d6dae8;letter-spacing:-0.300px;transform:scaleX(0.9938);">pixels</span>
<svg class="i" style="left:732.00px;top:475.40px" width="14.4" height="18" viewBox="0 0 14.4 18" preserveAspectRatio="none"><path d="M4.2 3.6 Q7.2 -0.9 10.2 3.6" stroke="#cfcfcf" stroke-width="1" fill="none"/><ellipse cx="2.7" cy="5.1" rx="2.5" ry="1.55" transform="rotate(-40 2.7 5.1)" fill="#e9e9e9"/><ellipse cx="11.7" cy="5.1" rx="2.5" ry="1.55" transform="rotate(40 11.7 5.1)" fill="#e9e9e9"/><path d="M3.2 16 L2.6 17.3 M11.2 16 L11.8 17.3" stroke="#6e7078" stroke-width=".9"/><circle cx="7.2" cy="11" r="5.7" fill="#f4f4f4" stroke="#b9b9bd" stroke-width=".9"/><path d="M7.2 8 V12.2" stroke="#5a5a5a" stroke-width=".8"/><path d="M5.9 11 H6.9 M7.6 11 H9.4" stroke="#e06060" stroke-width=".6"/></svg>
<span class="t" style="left:749.42px;top:473.86px;color:#d6dae8;letter-spacing:-0.242px;">Start (or reset) the timer</span>
<span class="t" style="left:941.16px;top:473.86px;color:#98c46c;letter-spacing:-0.300px;transform:scaleX(0.9663);">&quot;Enemy Spawner&quot;</span>
<span class="t" style="left:728.80px;top:499.86px;color:#868994;">Add action</span>
<svg class="i" style="left:731.20px;top:529.00px" width="15.6" height="15.8" viewBox="0 0 15.6 15.8" preserveAspectRatio="none"><path d="M2.2 2.2 L13.4 13.6 M13.4 2.2 L2.2 13.6" stroke="#5e1c10" stroke-width="4.2" stroke-linecap="round"/><path d="M2.2 2.2 L13.4 13.6 M13.4 2.2 L2.2 13.6" stroke="#cf4529" stroke-width="3" stroke-linecap="round"/></svg>
<span class="t" style="left:749.10px;top:526.86px;color:#d6dae8;letter-spacing:-0.073px;">Delete</span>
<svg class="i" style="left:809.00px;top:537.40px" width="10.6" height="2.3" viewBox="0 0 11.3 2.6" preserveAspectRatio="none"><rect x="0" y="0" width="11.3" height="2.6" fill="url(#gbul)"/></svg>
<span class="t" style="left:825.33px;top:526.86px;color:#d47be8;letter-spacing:-0.228px;font-weight:700;">Bullet2</span>
<span class="t" style="left:728.80px;top:552.86px;color:#868994;">Add action</span>
<svg class="i" style="left:731.20px;top:584.00px" width="15.6" height="15.8" viewBox="0 0 15.6 15.8" preserveAspectRatio="none"><path d="M2.2 2.2 L13.4 13.6 M13.4 2.2 L2.2 13.6" stroke="#5e1c10" stroke-width="4.2" stroke-linecap="round"/><path d="M2.2 2.2 L13.4 13.6 M13.4 2.2 L2.2 13.6" stroke="#cf4529" stroke-width="3" stroke-linecap="round"/></svg>
<span class="t" style="left:749.10px;top:581.86px;color:#d6dae8;letter-spacing:-0.073px;">Delete</span>
<svg class="i" style="left:809.00px;top:592.40px" width="10.6" height="2.3" viewBox="0 0 11.3 2.6" preserveAspectRatio="none"><rect x="0" y="0" width="11.3" height="2.6" fill="url(#gbul)"/></svg>
<span class="t" style="left:825.33px;top:581.86px;color:#d47be8;letter-spacing:-0.228px;font-weight:700;">Bullet2</span>
<span class="t" style="left:728.80px;top:607.86px;color:#868994;">Add action</span>
<svg class="i" style="left:730.00px;top:662.20px" width="18" height="16" viewBox="0 0 18 16" preserveAspectRatio="none"><rect x="0.1" y="5.4" width="12.1" height="10.5" fill="url(#gzg)"/><rect x="5.7" y="0" width="12.2" height="10.7" fill="#2b6cb0"/><rect x="6.6" y="0.7" width="10.2" height="8.8" fill="url(#gzb)"/></svg>
<span class="t" style="left:749.77px;top:659.86px;color:#d6dae8;letter-spacing:-0.212px;">Change the z-order of</span>
<svg class="i" style="left:930.30px;top:659.90px" width="10" height="20" viewBox="0 0 10 20" preserveAspectRatio="none"><g filter="url(#soft)"><rect x="2.9" y="0" width="4.2" height="1.1" fill="#141428"/><rect x="2.2" y="0.9" width="5.6" height="2" fill="#2f7414"/><rect x="3.3" y="2.6" width="3.8" height="2.5" fill="#d95f28"/><rect x="0.8" y="4.9" width="6.6" height="3.9" fill="#287a14"/><rect x="7.2" y="6" width="2.5" height="2" fill="#9a5218"/><rect x="4.1" y="7" width="1.7" height="1" fill="#c49c34"/><rect x="2" y="8.6" width="5.6" height="3.2" fill="#236e10"/><path d="M1.6 11 L5 11 L4.3 16.4 L0.4 16.4 Z" fill="#2e720e"/><path d="M5 10.5 L7.7 10.5 L9.1 16.6 L5.8 16.6 Z" fill="#1b5c0c"/><rect x="0.4" y="16.2" width="3.4" height="3.8" fill="#303c0a"/><rect x="6.2" y="16.2" width="3.2" height="2.7" fill="#263408"/></g></svg>
<span class="t" style="left:946.60px;top:659.86px;color:#d47be8;letter-spacing:-0.300px;transform:scaleX(0.9433);font-weight:700;">Enemy1</span>
<span class="t" style="left:1012.45px;top:659.86px;color:#d6dae8;">:</span>
<span class="t" style="left:1023.20px;top:659.86px;color:#b084f0;letter-spacing:-0.067px;">set to</span>
<span class="t" style="left:1073.03px;top:659.86px;color:#e6c378;letter-spacing:-0.300px;transform:scaleX(0.9813);">Player.ZOrder()+1</span>
<span class="t" style="left:728.80px;top:685.86px;color:#868994;">Add action</span>
<svg class="i" style="left:731.00px;top:716.10px" width="16.5" height="13.5" viewBox="0 0 16.5 13.5" preserveAspectRatio="none"><rect x="4.2" y="0" width="8.4" height="6.9" rx=".8" fill="url(#gcb)"/><rect x="0" y="6.3" width="7.7" height="7.2" rx=".8" fill="url(#gcr)"/><rect x="8.3" y="6.3" width="8.2" height="7.2" rx=".8" fill="url(#gcg)"/><path d="M8.2 1 V5.6 M3.6 7.4 V12.4 M12.6 7.4 V12.4" stroke="#fff" stroke-width=".7" opacity=".55"/></svg>
<span class="t" style="left:749.47px;top:712.86px;color:#d6dae8;letter-spacing:-0.300px;transform:scaleX(0.9955);">Create object</span>
<svg class="i" style="left:859.00px;top:721.40px" width="17.4" height="4.4" viewBox="0 0 17.4 4.4" preserveAspectRatio="none"><rect width="17.4" height="4.4" fill="#00ff00"/></svg>
<span class="t" style="left:879.05px;top:712.86px;color:#d47be8;letter-spacing:-0.300px;transform:scaleX(0.9680);font-weight:700;">enemy_viewdistance</span>
<span class="t" style="left:1052.93px;top:712.86px;color:#d6dae8;letter-spacing:0.123px;">at position</span>
<span class="t" style="left:1140.89px;top:712.86px;color:#e6c378;letter-spacing:-0.300px;transform:scaleX(0.9405);">Enemy1.X();Enemy1.Y()</span>
<span class="t" style="left:1324.04px;top:712.86px;color:#d6dae8;letter-spacing:-0.300px;transform:scaleX(0.9919);">(layer:</span>
<span class="t" style="left:1375.59px;top:712.86px;color:#98c46c;letter-spacing:-0.300px;transform:scaleX(0.9413);">Base layer</span>
<span class="t" style="left:1454.25px;top:712.86px;color:#d6dae8;">)</span>
<svg class="i" style="left:730.00px;top:742.20px" width="18" height="16" viewBox="0 0 18 16" preserveAspectRatio="none"><rect x="0.1" y="5.4" width="12.1" height="10.5" fill="url(#gzg)"/><rect x="5.7" y="0" width="12.2" height="10.7" fill="#2b6cb0"/><rect x="6.6" y="0.7" width="10.2" height="8.8" fill="url(#gzb)"/></svg>
<span class="t" style="left:749.77px;top:739.86px;color:#d6dae8;letter-spacing:-0.212px;">Change the z-order of</span>
<svg class="i" style="left:927.00px;top:748.40px" width="17.4" height="4.4" viewBox="0 0 17.4 4.4" preserveAspectRatio="none"><rect width="17.4" height="4.4" fill="#00ff00"/></svg>
<span class="t" style="left:947.05px;top:739.86px;color:#d47be8;letter-spacing:-0.300px;transform:scaleX(0.9680);font-weight:700;">enemy_viewdistance</span>
<span class="t" style="left:1116.45px;top:739.86px;color:#d6dae8;">:</span>
<span class="t" style="left:1126.20px;top:739.86px;color:#b084f0;letter-spacing:-0.067px;">set to</span>
<span class="t" style="left:1176.55px;top:739.86px;color:#e6c378;letter-spacing:-0.300px;transform:scaleX(0.9687);">Enemy1.ZOrder()-1</span>
<svg class="i" style="left:731.00px;top:770.10px" width="16.5" height="13.5" viewBox="0 0 16.5 13.5" preserveAspectRatio="none"><rect x="4.2" y="0" width="8.4" height="6.9" rx=".8" fill="url(#gcb)"/><rect x="0" y="6.3" width="7.7" height="7.2" rx=".8" fill="url(#gcr)"/><rect x="8.3" y="6.3" width="8.2" height="7.2" rx=".8" fill="url(#gcg)"/><path d="M8.2 1 V5.6 M3.6 7.4 V12.4 M12.6 7.4 V12.4" stroke="#fff" stroke-width=".7" opacity=".55"/></svg>
<span class="t" style="left:749.47px;top:766.86px;color:#d6dae8;letter-spacing:-0.300px;transform:scaleX(0.9955);">Create object</span>
<svg class="i" style="left:858.90px;top:776.10px" width="17.2" height="3.4" viewBox="0 0 17.2 3.4" preserveAspectRatio="none"><rect width="17.2" height="3.4" fill="#ff0000"/></svg>
<span class="t" style="left:878.96px;top:766.86px;color:#d47be8;letter-spacing:-0.300px;transform:scaleX(0.9647);font-weight:700;">enemy_shootdistance</span>
<span class="t" style="left:1061.43px;top:766.86px;color:#d6dae8;letter-spacing:0.113px;">at position</span>
<span class="t" style="left:1149.39px;top:766.86px;color:#e6c378;letter-spacing:-0.300px;transform:scaleX(0.9405);">Enemy1.X();Enemy1.Y()</span>
<span class="t" style="left:1332.45px;top:766.86px;color:#d6dae8;letter-spacing:-0.300px;transform:scaleX(0.9897);">(layer:</span>
<span class="t" style="left:1383.89px;top:766.86px;color:#98c46c;letter-spacing:-0.300px;transform:scaleX(0.9413);">Base layer</span>
<span class="t" style="left:1462.95px;top:766.86px;color:#d6dae8;">)</span>
<svg class="i" style="left:730.00px;top:796.20px" width="18" height="16" viewBox="0 0 18 16" preserveAspectRatio="none"><rect x="0.1" y="5.4" width="12.1" height="10.5" fill="url(#gzg)"/><rect x="5.7" y="0" width="12.2" height="10.7" fill="#2b6cb0"/><rect x="6.6" y="0.7" width="10.2" height="8.8" fill="url(#gzb)"/></svg>
<span class="t" style="left:749.77px;top:793.86px;color:#d6dae8;letter-spacing:-0.212px;">Change the z-order of</span>
<svg class="i" style="left:927.00px;top:803.10px" width="17.2" height="3.4" viewBox="0 0 17.2 3.4" preserveAspectRatio="none"><rect width="17.2" height="3.4" fill="#ff0000"/></svg>
<span class="t" style="left:946.86px;top:793.86px;color:#d47be8;letter-spacing:-0.300px;transform:scaleX(0.9642);font-weight:700;">enemy_shootdistance</span>
<span class="t" style="left:1124.85px;top:793.86px;color:#d6dae8;">:</span>
<span class="t" style="left:1134.90px;top:793.86px;color:#b084f0;letter-spacing:-0.067px;">set to</span>
<span class="t" style="left:1185.25px;top:793.86px;color:#e6c378;letter-spacing:-0.300px;transform:scaleX(0.9680);">Enemy1.ZOrder()-1</span>
<svg class="i" style="left:731.00px;top:827.80px" width="16.2" height="6.5" viewBox="0 0 16.4 6.8" preserveAspectRatio="none"><path d="M0.2 0.3 H4.9 L6.1 2.4 H10.3 L11.5 0.3 H16.2 V1.5 H12.5 L11.6 3.4 L12.5 5.3 H16.2 V6.5 H11.5 L10.3 4.4 H6.1 L4.9 6.5 H0.2 V5.3 H3.9 L4.8 3.4 L3.9 1.5 H0.2 Z" fill="#e4e4d6"/></svg>
<span class="t" style="left:749.25px;top:821.86px;color:#d6dae8;letter-spacing:-0.117px;">Link</span>
<svg class="i" style="left:787.00px;top:830.40px" width="17.4" height="4.4" viewBox="0 0 17.4 4.4" preserveAspectRatio="none"><rect width="17.4" height="4.4" fill="#00ff00"/></svg>
<span class="t" style="left:807.05px;top:821.86px;color:#d47be8;letter-spacing:-0.300px;transform:scaleX(0.9680);font-weight:700;">enemy_viewdistance</span>
<span class="t" style="left:981.13px;top:821.86px;color:#d6dae8;letter-spacing:-0.217px;">and</span>
<svg class="i" style="left:1020.10px;top:821.90px" width="10" height="20" viewBox="0 0 10 20" preserveAspectRatio="none"><g filter="url(#soft)"><rect x="2.9" y="0" width="4.2" height="1.1" fill="#141428"/><rect x="2.2" y="0.9" width="5.6" height="2" fill="#2f7414"/><rect x="3.3" y="2.6" width="3.8" height="2.5" fill="#d95f28"/><rect x="0.8" y="4.9" width="6.6" height="3.9" fill="#287a14"/><rect x="7.2" y="6" width="2.5" height="2" fill="#9a5218"/><rect x="4.1" y="7" width="1.7" height="1" fill="#c49c34"/><rect x="2" y="8.6" width="5.6" height="3.2" fill="#236e10"/><path d="M1.6 11 L5 11 L4.3 16.4 L0.4 16.4 Z" fill="#2e720e"/><path d="M5 10.5 L7.7 10.5 L9.1 16.6 L5.8 16.6 Z" fill="#1b5c0c"/><rect x="0.4" y="16.2" width="3.4" height="3.8" fill="#303c0a"/><rect x="6.2" y="16.2" width="3.2" height="2.7" fill="#263408"/></g></svg>
<span class="t" style="left:1036.70px;top:821.86px;color:#d47be8;letter-spacing:-0.300px;transform:scaleX(0.9448);font-weight:700;">Enemy1</span>
<svg class="i" style="left:731.00px;top:854.80px" width="16.2" height="6.5" viewBox="0 0 16.4 6.8" preserveAspectRatio="none"><path d="M0.2 0.3 H4.9 L6.1 2.4 H10.3 L11.5 0.3 H16.2 V1.5 H12.5 L11.6 3.4 L12.5 5.3 H16.2 V6.5 H11.5 L10.3 4.4 H6.1 L4.9 6.5 H0.2 V5.3 H3.9 L4.8 3.4 L3.9 1.5 H0.2 Z" fill="#e4e4d6"/></svg>
<span class="t" style="left:749.25px;top:848.86px;color:#d6dae8;letter-spacing:-0.117px;">Link</span>
<svg class="i" style="left:787.00px;top:858.10px" width="17.2" height="3.4" viewBox="0 0 17.2 3.4" preserveAspectRatio="none"><rect width="17.2" height="3.4" fill="#ff0000"/></svg>
<span class="t" style="left:807.06px;top:848.86px;color:#d47be8;letter-spacing:-0.300px;transform:scaleX(0.9642);font-weight:700;">enemy_shootdistance</span>
<span class="t" style="left:989.73px;top:848.86px;color:#d6dae8;letter-spacing:-0.167px;">and</span>
<svg class="i" style="left:1028.70px;top:848.90px" width="10" height="20" viewBox="0 0 10 20" preserveAspectRatio="none"><g filter="url(#soft)"><rect x="2.9" y="0" width="4.2" height="1.1" fill="#141428"/><rect x="2.2" y="0.9" width="5.6" height="2" fill="#2f7414"/><rect x="3.3" y="2.6" width="3.8" height="2.5" fill="#d95f28"/><rect x="0.8" y="4.9" width="6.6" height="3.9" fill="#287a14"/><rect x="7.2" y="6" width="2.5" height="2" fill="#9a5218"/><rect x="4.1" y="7" width="1.7" height="1" fill="#c49c34"/><rect x="2" y="8.6" width="5.6" height="3.2" fill="#236e10"/><path d="M1.6 11 L5 11 L4.3 16.4 L0.4 16.4 Z" fill="#2e720e"/><path d="M5 10.5 L7.7 10.5 L9.1 16.6 L5.8 16.6 Z" fill="#1b5c0c"/><rect x="0.4" y="16.2" width="3.4" height="3.8" fill="#303c0a"/><rect x="6.2" y="16.2" width="3.2" height="2.7" fill="#263408"/></g></svg>
<span class="t" style="left:1045.10px;top:848.86px;color:#d47be8;letter-spacing:-0.300px;transform:scaleX(0.9433);font-weight:700;">Enemy1</span>
<span class="t" style="left:728.80px;top:874.86px;color:#868994;">Add action</span>
</body></html>
